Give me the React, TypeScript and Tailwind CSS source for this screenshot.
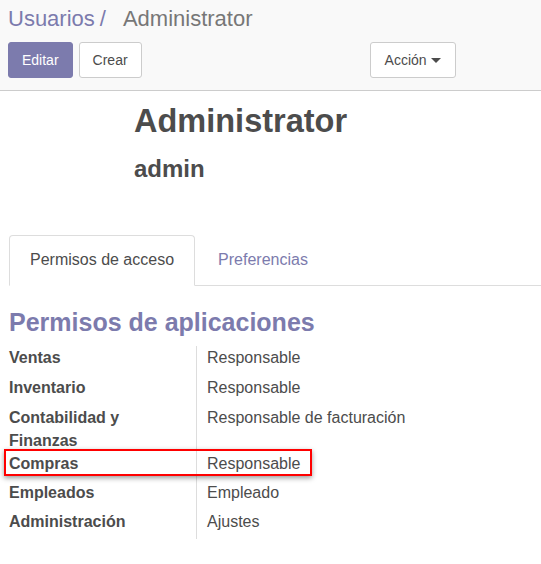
const purple = "text-[#7c7bad]"

const rows = [
  { label: ["Ventas"], value: "Responsable", h: "h-[30px]" },
  { label: ["Inventario"], value: "Responsable", h: "h-[30px]" },
  { label: ["Contabilidad y", "Finanzas"], value: "Responsable de facturación", h: "h-[46px]" },
  { label: ["Compras"], value: "Responsable", h: "h-[29px]" },
  { label: ["Empleados"], value: "Empleado", h: "h-[29px]" },
  { label: ["Administración"], value: "Ajustes", h: "h-[29px]" },
]

function ControlPanel() {
  return (
    <div className="bg-[#f9f9f9] border-b border-[#cccccc] px-[8px] pt-[4px] h-[91px]">
      <div className="text-[22px] leading-[30px] whitespace-nowrap">
        <span className={purple}>Usuarios</span>
        <span className={`${purple} ml-[5px]`}>/</span>
        <span className="text-[#777777] ml-[17px]">Administrator</span>
      </div>
      <div className="flex items-center mt-[8px] text-[14px]">
        <button className="h-[36px] px-[13px] rounded-[3px] border border-[#7c7bad] bg-[#7c7bad] text-white">
          Editar
        </button>
        <button className="h-[36px] px-[13px] ml-[6px] rounded-[3px] border border-[#cccccc] bg-white text-[#4c4c4c]">
          Crear
        </button>
        <button className="h-[36px] px-[14px] ml-[228px] rounded-[3px] border border-[#cccccc] bg-white text-[#4c4c4c] flex items-center">
          Acción
          <span className="inline-block ml-[4px] w-0 h-0 border-x-[5px] border-x-transparent border-t-[5px] border-t-[#4c4c4c]"></span>
        </button>
      </div>
    </div>
  )
}

export default function App() {
  return (
    <div className="w-[541px] h-[564px] bg-white text-[#4c4c4c] font-['Liberation_Sans',Arial,sans-serif] overflow-hidden">
      <ControlPanel />

      <div className="pl-[9px]">
        <div className="pl-[125px] pt-[12px]">
          <h1 className="text-[32.5px] leading-[36px] font-bold">Administrator</h1>
          <h2 className="mt-[16px] text-[24px] leading-[28px] font-bold">admin</h2>
        </div>

        <div className="mt-[52px] flex border-b border-[#dddddd] text-[16px]">
          <div className="-mb-px px-[20px] py-[12px] leading-[24px] border border-[#dddddd] border-b-white rounded-t-[4px] bg-white">
            Permisos de acceso
          </div>
          <div className={`ml-[2px] px-[20px] py-[12px] leading-[24px] border border-transparent ${purple}`}>
            Preferencias
          </div>
        </div>

        <h3 className={`mt-[21px] text-[25px] leading-[30px] font-bold ${purple}`}>
          Permisos de aplicaciones
        </h3>

        <div className="relative mt-[9px] text-[16px] leading-[23px]">
          {rows.map((row, i) => (
            <div key={i} className={`flex ${row.h}`}>
              <div className="w-[187px] font-bold">
                {row.label.map((l, j) => (
                  <div key={j}>{l}</div>
                ))}
              </div>
              <div className="flex-1 border-l border-[#dddddd] pl-[10px]">{row.value}</div>
            </div>
          ))}
          <div className="absolute left-[-5px] top-[103px] w-[308px] h-[27px] border-2 border-[#ff0000] shadow-[0_2px_5px_rgba(0,0,0,0.4)]"></div>
        </div>
      </div>
    </div>
  )
}
